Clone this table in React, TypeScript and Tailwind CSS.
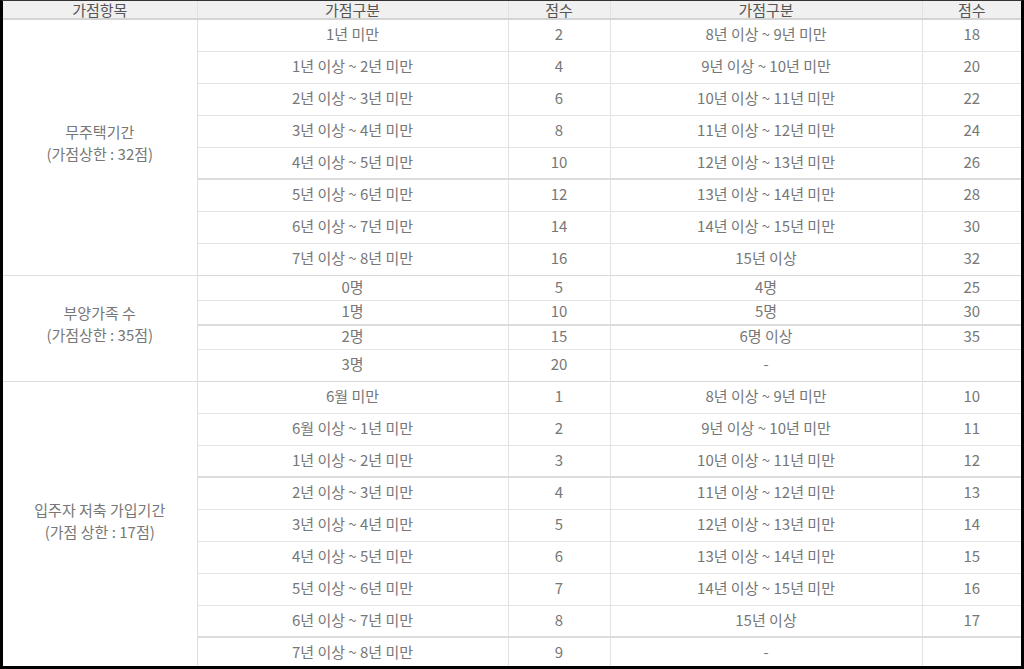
const font = { fontFamily: '"Noto Sans CJK KR", "Noto Sans", sans-serif' }

type Row = { a: string; b: string; c: string; d: string; thick?: boolean; h?: string }

const groups: { label: string[]; rows: Row[] }[] = [
  {
    label: ['무주택기간', '(가점상한 : 32점)'],
    rows: [
      { a: '1년 미만', b: '2', c: '8년 이상 ~ 9년 미만', d: '18' },
      { a: '1년 이상 ~ 2년 미만', b: '4', c: '9년 이상 ~ 10년 미만', d: '20' },
      { a: '2년 이상 ~ 3년 미만', b: '6', c: '10년 이상 ~ 11년 미만', d: '22' },
      { a: '3년 이상 ~ 4년 미만', b: '8', c: '11년 이상 ~ 12년 미만', d: '24' },
      { a: '4년 이상 ~ 5년 미만', b: '10', c: '12년 이상 ~ 13년 미만', d: '26', thick: true },
      { a: '5년 이상 ~ 6년 미만', b: '12', c: '13년 이상 ~ 14년 미만', d: '28' },
      { a: '6년 이상 ~ 7년 미만', b: '14', c: '14년 이상 ~ 15년 미만', d: '30' },
      { a: '7년 이상 ~ 8년 미만', b: '16', c: '15년 이상', d: '32' },
    ],
  },
  {
    label: ['부양가족 수', '(가점상한 : 35점)'],
    rows: [
      { a: '0명', b: '5', c: '4명', d: '25', h: 'h-[25px]' },
      { a: '1명', b: '10', c: '5명', d: '30', h: 'h-[25px]', thick: true },
      { a: '2명', b: '15', c: '6명 이상', d: '35', h: 'h-[24px]' },
      { a: '3명', b: '20', c: '-', d: '', h: 'h-[32px]' },
    ],
  },
  {
    label: ['입주자 저축 가입기간', '(가점 상한 : 17점)'],
    rows: [
      { a: '6월 미만', b: '1', c: '8년 이상 ~ 9년 미만', d: '10' },
      { a: '6월 이상 ~ 1년 미만', b: '2', c: '9년 이상 ~ 10년 미만', d: '11' },
      { a: '1년 이상 ~ 2년 미만', b: '3', c: '10년 이상 ~ 11년 미만', d: '12', thick: true },
      { a: '2년 이상 ~ 3년 미만', b: '4', c: '11년 이상 ~ 12년 미만', d: '13' },
      { a: '3년 이상 ~ 4년 미만', b: '5', c: '12년 이상 ~ 13년 미만', d: '14' },
      { a: '4년 이상 ~ 5년 미만', b: '6', c: '13년 이상 ~ 14년 미만', d: '15' },
      { a: '5년 이상 ~ 6년 미만', b: '7', c: '14년 이상 ~ 15년 미만', d: '16' },
      { a: '6년 이상 ~ 7년 미만', b: '8', c: '15년 이상', d: '17', thick: true },
      { a: '7년 이상 ~ 8년 미만', b: '9', c: '-', d: '' },
    ],
  },
]

export default function App() {
  return (
    <div
      className="h-[669px] w-[1024px] overflow-hidden border-t border-l-[3px] border-r-[3px] border-b-[3px] border-t-[#333] border-l-black border-r-black border-b-black bg-white"
      style={font}
    >
      <table className="w-full table-fixed border-collapse text-[15px] text-[#777]">
        <colgroup>
          <col className="w-[194px]" />
          <col className="w-[311px]" />
          <col className="w-[102px]" />
          <col className="w-[312px]" />
          <col />
        </colgroup>
        <thead>
          <tr className="h-[18px] border-b-2 border-[#d4d4d4] bg-[#f0f0f0] text-[#555]">
            <th className="border-r border-[#e2e2e2] p-0 font-normal leading-[17px]">가점항목</th>
            <th className="border-r border-[#e2e2e2] p-0 font-normal leading-[17px]">가점구분</th>
            <th className="border-r border-[#e2e2e2] p-0 font-normal leading-[17px]">점수</th>
            <th className="border-r border-[#e2e2e2] p-0 font-normal leading-[17px]">가점구분</th>
            <th className="p-0 font-normal leading-[17px]">점수</th>
          </tr>
        </thead>
        <tbody>
          {groups.map((g) =>
            g.rows.map((r, i) => (
              <tr
                key={g.label[0] + i}
                className={`${r.h ?? 'h-[32px]'} ${
                  i === g.rows.length - 1
                    ? 'border-b border-[#d8d8d8]'
                    : r.thick
                      ? 'border-b-2 border-[#dcdcdc]'
                      : 'border-b border-[#e4e4e4]'
                }`}
              >
                {i === 0 && (
                  <td
                    rowSpan={g.rows.length}
                    className="border-r border-b border-[#dedede] p-0 pb-[8px] text-center leading-[22px]"
                  >
                    {g.label.map((l) => (
                      <div key={l}>{l}</div>
                    ))}
                  </td>
                )}
                <td className="border-r border-[#e2e2e2] p-0 pb-[2px] text-center leading-[20px]">{r.a}</td>
                <td className="border-r border-[#e2e2e2] p-0 pb-[2px] text-center leading-[20px]">{r.b}</td>
                <td className="border-r border-[#e2e2e2] p-0 pb-[2px] text-center leading-[20px]">{r.c}</td>
                <td className="p-0 pb-[2px] text-center leading-[20px]">{r.d}</td>
              </tr>
            )),
          )}
        </tbody>
      </table>
    </div>
  )
}
